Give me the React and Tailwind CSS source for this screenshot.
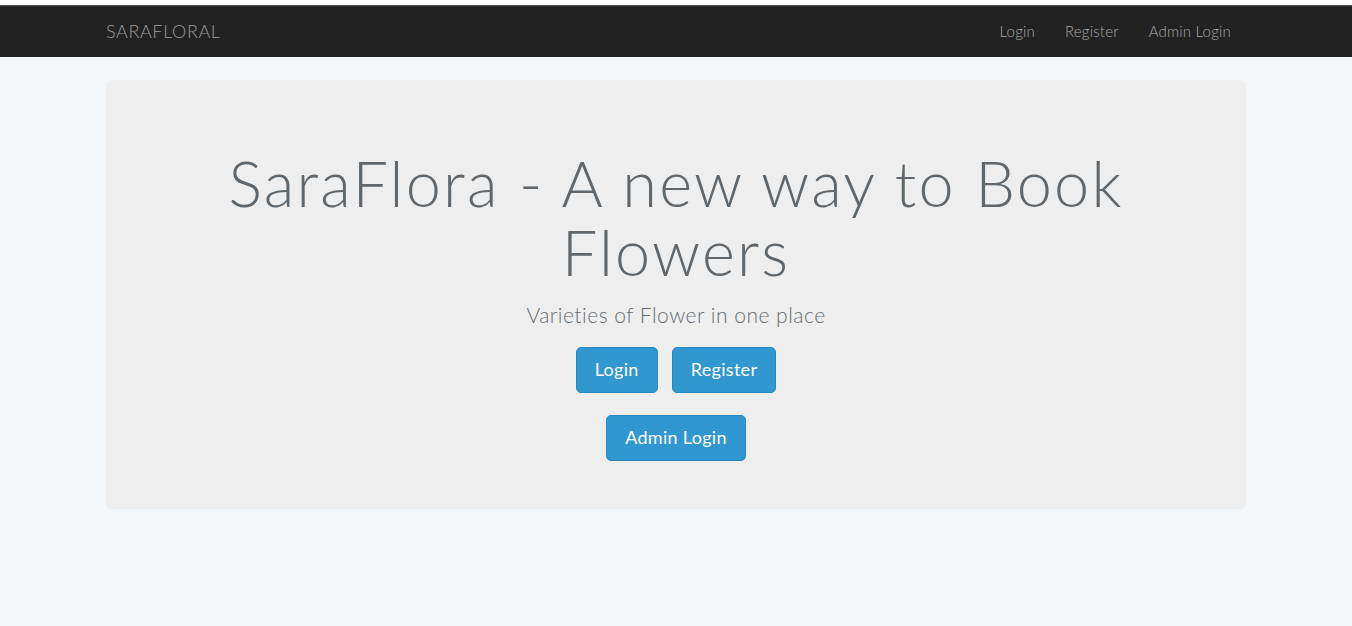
const navLinks = ["Login", "Register", "Admin Login"];

export default function App() {
  return (
    <div className="min-h-[626px] bg-white pt-[5px] font-['Lato',sans-serif]">
      <nav className="h-[52px] border-t border-[#555] bg-[#222222]">
        <div className="mx-auto flex h-full w-[1170px] items-center justify-between px-[15px]">
          <span className="text-[18px] font-light tracking-[0.6px] text-[#9d9d9d]">
            SARAFLORAL
          </span>
          <ul className="flex h-full items-center pb-[1px]">
            {navLinks.map((label) => (
              <li key={label}>
                <a className="px-[15px] text-[15px] font-light tracking-[0.2px] text-[#a9a9a9]">{label}</a>
              </li>
            ))}
          </ul>
        </div>
      </nav>

      <main className="h-[569px] bg-[#f4f7fa] pt-[23px]">
        <div className="mx-auto w-[1140px]">
          <section className="flex h-[429px] flex-col items-center rounded-[6px] bg-[#eeeeee] px-[40px] pt-[68px]">
            <h1 className="w-[960px] text-center text-[63px] font-light leading-[69px] tracking-[2.2px] text-[#5f676c]">
              SaraFlora - A new way to Book Flowers
            </h1>
            <p className="mt-[13px] text-[21px] font-light tracking-[0.5px] text-[#666d72]">
              Varieties of Flower in one place
            </p>
            <div className="mt-[16px] flex gap-[14px]">
              <button className="h-[46px] rounded-[5px] border border-[#2a88bd] bg-[#3097d1] px-[18px] text-[18px] tracking-[0.3px] text-white">
                Login
              </button>
              <button className="h-[46px] rounded-[5px] border border-[#2a88bd] bg-[#3097d1] px-[18px] text-[18px] tracking-[0.3px] text-white">
                Register
              </button>
            </div>
            <button className="mt-[22px] h-[46px] rounded-[5px] border border-[#2a88bd] bg-[#3097d1] px-[18px] text-[18px] tracking-[0.3px] text-white">
              Admin Login
            </button>
          </section>
        </div>
      </main>
    </div>
  );
}
